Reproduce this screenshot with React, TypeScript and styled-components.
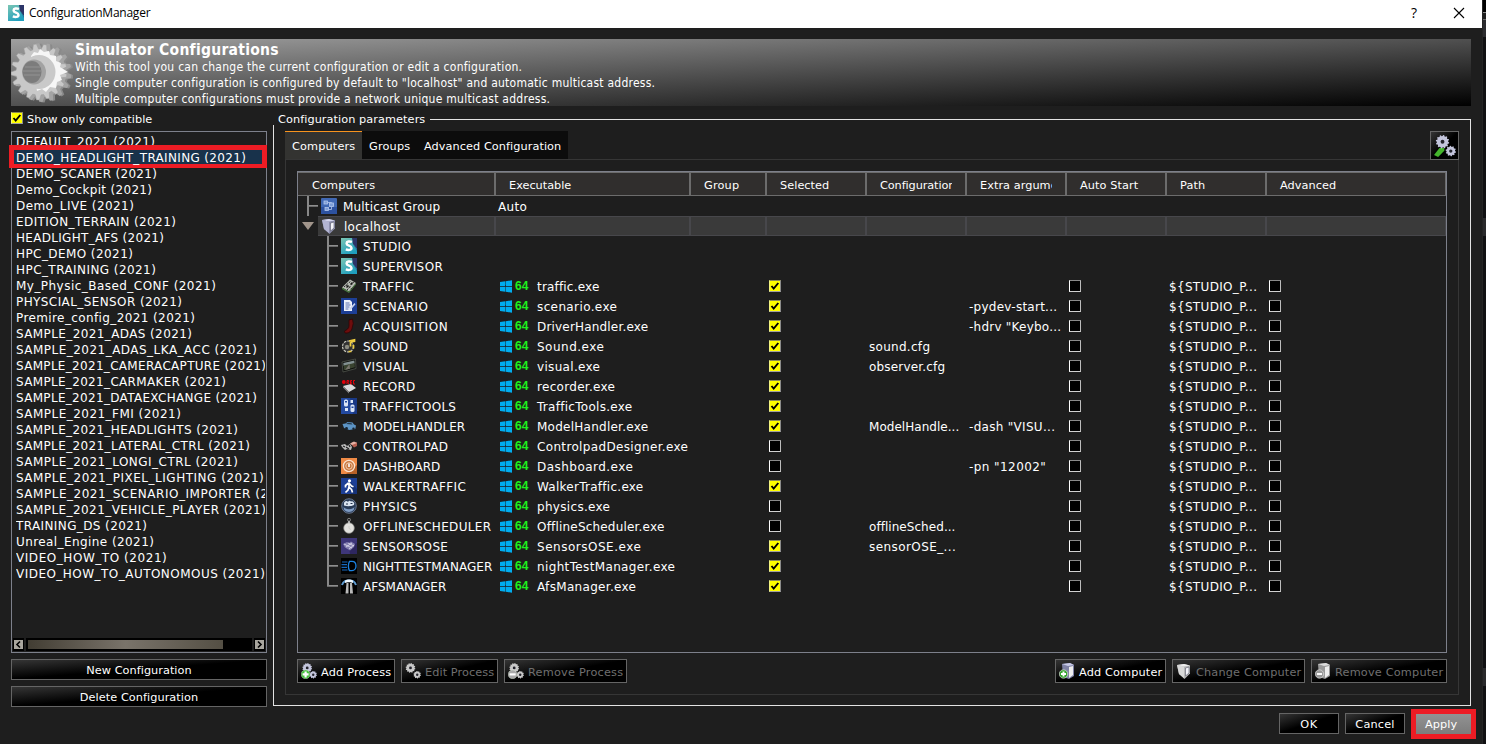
import React, { useLayoutEffect, useRef, useState } from 'react';
import styled, { createGlobalStyle, css } from 'styled-components';

const Global = createGlobalStyle`
  body { margin: 0; background: #1e1e1e; overflow: hidden; }
  * { box-sizing: border-box; }
  #root { font-family: Verdana, "DejaVu Sans", sans-serif; font-size: 12px; color: #fff; }
`;

/* ---------- text that is tracked to a given width ---------- */
const FitSpan = styled.span`
  display: inline-block;
  white-space: pre;
  flex: none;
`;
function Fit({ w, children }: { w: number; children: string }) {
  const ref = useRef<HTMLSpanElement>(null);
  const [spacing, setSpacing] = useState(0);
  useLayoutEffect(() => {
    if (ref.current) {
      const natural = ref.current.getBoundingClientRect().width;
      setSpacing((w + 0.3 - natural) / children.length);
    }
  }, []);
  return <FitSpan ref={ref} style={{ letterSpacing: `${spacing}px` }}>{children}</FitSpan>;
}

/* ---------- frame ---------- */
const Screen = styled.div`
  display: flex;
  width: 1486px;
  height: 744px;
  background: #1e1e1e;
`;
const Window = styled.div`
  display: flex;
  flex-direction: column;
  width: 1482px;
`;
const Behind = styled.div`
  width: 4px;
  background: #111113;
  border-left: 1px solid #242424;
  display: flex;
  flex-direction: column;
`;
const BehindPart = styled.div<{ $h: number; $c: string }>`
  height: ${p => p.$h}px;
  background: ${p => p.$c};
`;
const TitleBar = styled.div`
  display: flex;
  align-items: center;
  height: 28px;
  padding: 0 17px 3px 8px;
  background: #fff;
  color: #000;
  font-family: "Segoe UI", "Open Sans", sans-serif;
  font-size: 12px;
`;
const TitleText = styled.div`
  flex: 1;
  padding: 0 0 0 5px;
`;
const HelpMark = styled.div`
  width: 8px;
  margin-right: 34px;
  font-size: 14px;
`;
const Banner = styled.div`
  display: flex;
  width: 1460px;
  height: 67px;
  margin: 11px 0 0 11px;
  background: linear-gradient(to bottom right, #a0a0a0, #000);
`;
const BannerText = styled.div`
  padding: 2px 0 0 2px;
  font-family: Tahoma, "DejaVu Sans Condensed", "DejaVu Sans", sans-serif;
  font-stretch: condensed;
  line-height: 16px;
`;
const BannerTitle = styled.div`
  font-size: 15.5px;
  font-weight: bold;
  line-height: 18px;
`;
const Main = styled.div`
  display: flex;
  gap: 6px;
  height: 600px;
  padding-left: 11px;
`;

/* ---------- left column ---------- */
const Side = styled.div`
  display: flex;
  flex-direction: column;
  width: 256px;
`;
const CheckLine = styled.div`
  display: flex;
  flex: none;
  align-items: center;
  gap: 4px;
  height: 25px;
  padding-bottom: 1px;
  font-size: 11.3px;
  ${FitSpan} { padding-top: 2px; }
`;
const ListBox = styled.div`
  display: flex;
  flex: none;
  flex-direction: column;
  height: 522px;
  margin-bottom: 6px;
  padding: 1px;
  border: 1px solid #7d808b;
`;
const ListRows = styled.div`
  flex: 1;
`;
const ListRow = styled.div`
  height: 16px;
  padding-left: 3px;
  line-height: 19px;
  white-space: nowrap;
`;
const Clip = styled.div`
  height: 16px;
  overflow: hidden;
`;
const SelectedRow = styled(ListRow)`
  position: relative;
  z-index: 1;
  width: 258px;
  height: 23px;
  margin: -4px 0 -3px -4px;
  padding-left: 2px;
  border: 5px solid #ed1c24;
  border-bottom-width: 4px;
  background: #18324b;
  line-height: 17px;
`;
const ScrollBar = styled.div`
  display: flex;
  gap: 2px;
  height: 13px;
`;
const ScrollEnd = styled.div`
  display: flex;
  align-items: center;
  justify-content: center;
  width: 11px;
  background: #000;
`;
const ScrollTrack = styled.div`
  flex: 1;
  padding: 2px;
  background: #000;
`;
const ScrollThumb = styled.div`
  width: 195px;
  height: 9px;
  background: linear-gradient(to right, #423d33, #79736a 50%, #544f44);
`;
const boxed = css`
  display: flex;
  align-items: center;
  justify-content: center;
  border: 1px solid #656565;
  background: linear-gradient(to bottom right, #353535, #000 50%);
  color: #fff;
  font-family: inherit;
  font-size: 11.3px;
  ${FitSpan} { padding-top: 2px; }
`;
const WideButton = styled.div`
  ${boxed}
  flex: none;
  height: 21px;
  margin-bottom: 6px;
`;

/* ---------- group box ---------- */
const Group = styled.div`
  display: flex;
  flex-direction: column;
  width: 1198px;
`;
const GroupHead = styled.div`
  display: flex;
  height: 19px;
  padding-left: 5px;
  font-size: 11.3px;
  line-height: 27px;
`;
const GroupRule = styled.div`
  flex: 1;
  height: 6px;
  margin: 13px 0 0 5px;
  border: solid #e2e2e2;
  border-width: 1px 1px 0 0;
`;
const GroupBody = styled.div`
  flex: 1;
  display: flex;
  flex-direction: column;
  padding: 6px 11px 10px;
  border: solid #e2e2e2;
  border-width: 0 1px 1px 1px;
`;
const TabRow = styled.div`
  display: flex;
  height: 28px;
`;
const Tab = styled.div<{ $active?: boolean; $w: number }>`
  width: ${p => p.$w}px;
  padding-left: 7px;
  border-top: 1px solid ${p => (p.$active ? '#f7931e' : '#0c0c0c')};
  background: ${p => (p.$active ? '#333331' : '#0c0c0c')};
  font-size: 11.3px;
  line-height: 29px;
`;
const GearButton = styled.div`
  ${boxed}
  position: relative;
  width: 29px;
  height: 29px;
  margin-left: auto;
`;
const Pane = styled.div`
  flex: 1;
  padding: 11px;
  border: 1px solid #363636;
`;
const ButtonRow = styled.div`
  display: flex;
  gap: 6px;
  margin-top: 6px;
`;
const IconButton = styled.div<{ $w: number; $off?: boolean; $push?: boolean }>`
  ${boxed}
  justify-content: flex-start;
  gap: 4px;
  width: ${p => p.$w}px;
  height: 24px;
  padding-left: 3px;
  margin-left: ${p => (p.$push ? 'auto' : '0')};
  color: ${p => (p.$off ? '#6f6f6f' : '#fff')};
`;

/* ---------- table ---------- */
const Table = styled.div`
  height: 482px;
  border: 1px solid #7d808b;
`;
const columns = '198px 195px 76px 100px 100px 100px 100px 100px 179px';
const HeadRow = styled.div`
  display: grid;
  grid-template-columns: ${columns};
  height: 24px;
  border: solid #6c6c6c;
  border-width: 1px 0 1px 0;
`;
const HeadCell = styled.div`
  overflow: hidden;
  padding-left: 13px;
  border-right: 2px solid #6c6c6c;
  background: #302e2d;
  font-size: 11.3px;
  line-height: 25px;
  white-space: nowrap;
  &:first-child { padding-left: 14px; }
  &:last-child { border-right-width: 1px; }
`;
const HeadClip = styled.div`
  width: 72px;
  overflow: hidden;
`;
const Row = styled.div`
  display: grid;
  grid-template-columns: ${columns};
  height: 20px;
  ${FitSpan} { padding-top: 2px; }
`;
const Cell = styled.div<{ $lit?: boolean }>`
  display: flex;
  align-items: center;
  height: 20px;
  padding-left: 2px;
  white-space: nowrap;
  ${p => p.$lit && css`
    border: solid #47474b;
    border-width: 1px 2px 1px 0;
    background: #3a3a3a;
    &:last-child { border-right-width: 1px; }
  `}
`;
const NameCell = styled(Cell)`
  padding-left: 0;
`;
const HostLabel = styled.div`
  display: flex;
  align-items: center;
  gap: 7px;
  width: 178px;
  height: 20px;
  padding-left: 3px;
  border: solid #47474b;
  border-width: 1px 2px 1px 0;
  background: #3a3a3a;
`;
const Twisty = styled.div`
  width: 20px;
  padding-left: 4px;
  line-height: 0;
`;
const Branch = styled.div<{ $indent: number; $last?: boolean }>`
  width: 11px;
  height: 20px;
  margin-left: ${p => p.$indent}px;
  margin-right: 3px;
  background:
    linear-gradient(#888, #888) 0 0 / 2px ${p => (p.$last ? '10px' : '20px')} no-repeat,
    linear-gradient(#8e8e8e 50%, #6a6a6a 50%) 0 9px / 11px 2px no-repeat;
`;
const Name = styled.div`
  margin-left: 6px;
`;
const Bits = styled.span`
  width: 19px;
  padding-left: 3px;
  color: #1df01d;
  font: bold 12px "Liberation Sans", Arial, sans-serif;
`;
const Check = styled.div<{ $on?: boolean }>`
  display: flex;
  align-items: center;
  justify-content: center;
  flex: none;
  width: 12px;
  height: 12px;
  border: 1px solid;
  border-color: ${p => (p.$on ? '#8e8e50 #8a8a8a #a0a0a0 #f4f480' : '#8a8a8a #bdbdbd #d0d0d0 #fff')};
  background: ${p => (p.$on ? '#ff0' : '#000')};
`;

/* ---------- footer ---------- */
const Footer = styled.div`
  display: flex;
  justify-content: flex-end;
  align-items: flex-start;
  gap: 6px;
  padding: 3px 6px 0 0;
`;
const DialogButton = styled.div`
  ${boxed}
  width: 60px;
  height: 21px;
  margin-top: 4px;
`;
const Highlighted = styled.div`
  display: flex;
  width: 65px;
  height: 30px;
  padding-left: 9px;
  border: 5px solid #ed1c24;
  background: linear-gradient(#929292, #7c7c7c);
  font-size: 11.3px;
  line-height: 22px;
`;

/* ---------- icons ---------- */
const Svg = ({ s = 16, children }: { s?: number; children: React.ReactNode }) => (
  <svg width={s} height={s} viewBox="0 0 16 16" style={{ flex: 'none', display: 'block' }}>{children}</svg>
);
const gearPath = (cx: number, cy: number, r: number, n: number, root = 0.78) => {
  let d = '';
  for (let i = 0; i < n; i++) {
    const a = (i / n) * Math.PI * 2;
    const step = (Math.PI * 2) / n;
    [[0, root], [0.2, 1], [0.5, 1], [0.7, root]].forEach(([o, k], j) => {
      d += `${i + j ? 'L' : 'M'}${(cx + Math.cos(a + o * step) * r * k).toFixed(2)} ${(cy + Math.sin(a + o * step) * r * k).toFixed(2)}`;
    });
  }
  return d + 'Z';
};
const BrandIcon = () => (
  <Svg>
    <defs><linearGradient id="brand" x2="0.6" y2="1"><stop stopColor="#7cc6b4" /><stop offset="1" stopColor="#1f9fbe" /></linearGradient></defs>
    <rect width="16" height="16" fill="url(#brand)" />
    <path d="M11 0h5v11L12 6z" fill="#2c3568" />
    <path d="M12 6l4 5v2z" fill="#226f96" />
    <path d="M11 3.9C8.500 3 5.600 3.400 5.600 5.500c0 2.500 4.900 1.900 4.900 4.500 0 2.200-3.300 2.300-5.700 1.400" fill="none" stroke="#fff" strokeWidth="2.500" />
  </Svg>
);
const NetworkIcon = () => (
  <Svg>
    <rect width="16" height="16" rx="1" fill="#4068b4" />
    <path d="M0 9h16v7H0z" fill="#2d52a0" />
    <g fill="#7f9fd8" stroke="#b4c8ee" strokeWidth=".8"><rect x="3" y="3" width="3.500" height="3" /><rect x="8.500" y="5" width="4" height="3.500" /><rect x="4" y="9.500" width="3.500" height="3" /><path d="M6.500 4.500h4V5M10.500 9v2.500h-3" fill="none" /></g>
  </Svg>
);
const ServerIcon = ({ gray, mark }: { gray?: boolean; mark?: 'plus' | 'minus' }) => (
  <Svg s={16}>
    {mark ? (
      <>
        <path d="M3 1l8-1 4 2v11l-5 3-6-2z" fill={gray ? '#999' : '#7f82a5'} />
        <path d="M3 1l8-1 4 2-6 1z" fill={gray ? '#ddd' : '#c8cae8'} />
        <path d="M10 4l4-1v9l-4 3z" fill="#eee" />
        <circle cx="4.500" cy="11" r="4.200" fill={gray ? '#999' : '#35a52d'} stroke="#ddd" strokeWidth=".7" />
        <path d={mark === 'plus' ? 'M2 11h5M4.500 8.500v5' : 'M2 11h5'} stroke="#fff" strokeWidth="1.900" />
      </>
    ) : (
      <>
        <path d="M1 2l7-1 6 1.500v8L8.500 16 3 11z" fill={gray ? '#b7b7b7' : '#8d8fae'} />
        <path d="M1 2l7-1 6 1.500-6 1z" fill={gray ? '#eee' : '#d5d6ee'} />
        <path d="M1 2l7 1.500V15l-5-4z" fill={gray ? '#d8d8d8' : '#b2b4d2'} />
        <path d="M9.500 5l3.500-1v6l-3.500 3z" fill="#f4f4fa" stroke="#555768" strokeWidth=".6" />
      </>
    )}
  </Svg>
);
const GearsIcon = ({ gray, mark, s = 16 }: { gray?: boolean; mark?: 'plus' | 'minus' | 'arrow'; s?: number }) => (
  <Svg s={s}>
    {mark === 'arrow' && <path d="M0 14.500L4 9.500h3.500v2L3 16z" fill="#44b52c" />}
    <g fill={gray ? '#c9c9c9' : '#c3c5dc'}>
      <path d={gearPath(mark ? 6.200 : 5.500, 4.900, 4.900, 12, 0.84)} />
      <path d={gearPath(12.200, 11.700, 3.800, 10, 0.82)} />
    </g>
    <circle cx={mark ? 6.200 : 5.500} cy="4.900" r="1.400" fill="#22222b" />
    <circle cx="12.200" cy="11.700" r="1.200" fill="#22222b" />
    {(mark === 'plus' || mark === 'minus') && (
      <>
        <circle cx="4.600" cy="11.400" r="4.400" fill={gray ? '#a9a9a9' : '#45c23c'} stroke="#e2f3df" strokeWidth=".4" />
        <path d={mark === 'plus' ? 'M1.600 11.400h6M4.600 8.400v6' : 'M1.500 11.400h6.200'} stroke="#fff" strokeWidth="2.200" />
      </>
    )}
  </Svg>
);
const BigGear = () => (
  <svg width="62" height="67" viewBox="0 0 62 67" style={{ flex: 'none' }}>
    <path d={gearPath(33, 34, 29.500, 17, 0.83)} fill="#8a8a8a" />
    <path d={gearPath(31, 33.500, 29.500, 17, 0.83)} fill="#a4a4a4" />
    <path d={gearPath(28, 33, 28, 17, 0.82)} fill="#c8c8c8" stroke="#9a9a9a" strokeWidth=".5" />
    <path d="M20 17l3-4 4 1 2-4 4 3 5-1 1 4 6 1 0 5 5 2-1 4 8 5-8 3 2 5-5 2-1 6-6-1-4 5-4-3-5 2z" fill="#f6f6f6" />
    <ellipse cx="28" cy="33" rx="16.500" ry="17" fill="#c9c9c9" />
    <ellipse cx="23" cy="33" rx="12" ry="12.500" fill="#a2a2a2" />
    <ellipse cx="21" cy="33" rx="9.500" ry="11" fill="#7c7c7c" />
    <path d="M14 28h15M12 32h19M13 36h16" stroke="#929292" />
  </svg>
);
const WindowsIcon = () => (
  <svg width="12" height="13" viewBox="0 0 12 13" style={{ flex: 'none', marginLeft: 2 }}>
    <g fill="#00adef"><path d="M0 2l5.300-.7V6H0zM5.800 1.200L12 .3V6H5.800zM0 6.800h5.300v4.900L0 11zM5.800 6.800H12v5.900l-6.200-.9z" /></g>
  </svg>
);
const Tick = () => (
  <svg width="10" height="10" viewBox="0 0 10 10"><path d="M1.500 5l2.200 2.600L8.300 2" fill="none" stroke="#000" strokeWidth="1.900" /></svg>
);
const ScrollArrow = ({ d }: { d: string }) => (
  <svg width="9" height="9" viewBox="0 0 9 9"><rect width="9" height="9" fill="#aaa79f" /><path d={d} fill="none" stroke="#000" strokeWidth="1.600" /></svg>
);

const processIcons: Record<string, React.ReactNode> = {
  traffic: (
    <><path d="M1 9.500L9 1.500l6 3.500-7 8.500z" fill="#b9bdb5" /><path d="M1 9.500l7 4 7-8.500v1.500L8 15 1 11z" fill="#4a7a42" /><path d="M3 9l7-6M6 12l7-8M5 7l6 4" stroke="#2b2b2b" strokeWidth="1" strokeDasharray="2 1.200" /><path d="M5 9l2-2 1 1-2 2zM9 6l2-2 1 1-2 2z" fill="#151515" /></>
  ),
  scenario: (
    <><rect width="16" height="16" fill="#1d3f96" /><path d="M3 2h6l2 2v9H3z" fill="#eef2fb" /><path d="M4.500 5h4M4.500 7h5M4.500 9h4M4.500 11h3" stroke="#5a70b0" /><path d="M8 11l5.500-6 1 1.200L9.500 12z" fill="#c9d4ee" /></>
  ),
  acquisition: (
    <path d="M8 2l3.500-1 .7 4.500-1.200 5c-1 3.500-4 5-7 4.500L3.500 13c2-1 4.500-2.500 4.500-5z" fill="#6d0d0d" stroke="#300505" strokeWidth=".8" />
  ),
  sound: (
    <><circle cx="7" cy="8.500" r="5.500" fill="#333" stroke="#c9c9bd" strokeWidth="1.200" strokeDasharray="2.500 1" /><circle cx="6" cy="9" r="2.200" fill="#8b8b80" /><path d="M8 3l5.500-1.300v1.600L9.500 4M9.500 4v4.500M12.500 7v3.500M7.500 13.500h3" fill="none" stroke="#f0cd3e" strokeWidth="1.700" /></>
  ),
  visual: (
    <><path d="M1 4l13.500-3 .5 9.500L2 14z" fill="#0d0f0d" stroke="#50554d" strokeWidth=".8" /><path d="M2.300 5l11-2.500.3 3-11 2.500z" fill="#829091" /><path d="M2.600 7.500l11-2.500.3 4.300-11 3z" fill="#39432f" /><path d="M8.500 6L4 12l5-1.300z" fill="#77756c" /></>
  ),
  record: (
    <><path d="M2 8l8-2 5 4-7 4z" fill="#dadada" /><path d="M2 8l6 6v1.500L2 9.500z" fill="#888" /><circle cx="2.800" cy="4" r="1.900" fill="#e3000b" /><path d="M6 6V2.500h1.700V4L6 4.300M7 4.500L8 6M11 2.500H9.500V6H11M9.500 4.200H11M14 2.500h-1.500V6H14" fill="none" stroke="#e3000b" strokeWidth="1" /></>
  ),
  traffictools: (
    <><rect width="16" height="16" fill="#23499f" /><path d="M9 0h7v16H12z" fill="#1a3985" /><g fill="#dbe5f7"><rect x="3" y="1.500" width="4" height="7" rx="1.500" /><rect x="9.500" y="6.500" width="4" height="7.500" rx="1.500" /><path d="M4 10h3v3H4zM9.500 2H12v3H9.500z" /></g><path d="M4 3h2v1.500H4zM10.500 8.500h2V10h-2z" fill="#23499f" /></>
  ),
  modelhandler: (
    <><path d="M1.500 6l3-.5L6.500 4l5 .5 1.500 2 2 1-.7 3.500-6 1L3 10z" fill="#5c94c5" /><path d="M5 6l2-1.200 3.500.4 1 1.300z" fill="#23384c" /><circle cx="5.500" cy="10.500" r="1.400" fill="#172431" /><circle cx="12.500" cy="10.800" r="1.200" fill="#172431" /></>
  ),
  controlpad: (
    <><path d="M0 7l4-1 2 2 3-2 2 3-1 3-4-1-2 1-3-3z" fill="#bcbcbc" /><path d="M2 8l2 1M5 9l3 2M8 7l1 2" stroke="#222" strokeWidth="1.300" /><path d="M10 6l2-2 4 .5V8l-3 1.500z" fill="#b95f50" /><path d="M9 5.500l4-2 3 1.500-5 2z" fill="#e4b1a4" /></>
  ),
  dashboard: (
    <><rect width="16" height="16" fill="#ef8a45" /><path d="M5 16L16 7v9z" fill="#b86127" /><circle cx="8" cy="8" r="5.600" fill="#c77842" stroke="#fbe3d0" strokeWidth="1.300" /><circle cx="8" cy="8" r="3.200" fill="none" stroke="#f4cba9" /><path d="M8 5.500V9" stroke="#fff" strokeWidth="1.600" /></>
  ),
  walker: (
    <><rect width="16" height="16" fill="#1d3f96" /><path d="M9 3l7 8v5h-6z" fill="#163278" /><circle cx="8.500" cy="2.800" r="1.600" fill="#fff" /><path d="M8 4.500v5M7.500 5L4.500 7.500v2M8.500 5.500l2 2.500 2 .8M8 9l-1 3-2.500 2.500M8 9l2.500 2.500 1 3" fill="none" stroke="#fff" strokeWidth="1.700" /></>
  ),
  physics: (
    <><circle cx="8" cy="8" r="7.300" fill="#2a3c58" stroke="#7888a2" strokeWidth=".8" /><path d="M2.500 9c3 3 8 3 11 0l-.8 3c-2.500 2.500-7 2.500-9.500 0z" fill="#7f9cc4" /><path d="M3 5.500a2.200 2.200 0 014-1.500 2 2 0 013-.5 2.500 2.500 0 013 3.500c-3 1.500-7 1.500-10 .5z" fill="#dbe5f1" /><path d="M5 6h2M9.500 5.500h2" stroke="#233049" /></>
  ),
  scheduler: (
    <><circle cx="8" cy="10" r="5.300" fill="#e2e1dd" stroke="#8d8c88" strokeWidth=".7" /><path d="M7 3h2v2H7z" fill="#bbb" /><circle cx="8" cy="1.800" r="1.500" fill="none" stroke="#999" strokeWidth=".8" /><path d="M8 8v2.500l2 1" fill="none" stroke="#c9c8c4" strokeWidth=".8" /></>
  ),
  sensors: (
    <><rect width="16" height="16" fill="#3e3679" /><path d="M8 9l8-4v11H9z" fill="#2e2760" /><path d="M2 6l4-2 2 1 2-1.500L14 6l-1 3-4 3.500-5-3z" fill="#837eb0" /><path d="M3 6l8 4M7 5l6 3M5 9l6-4M8 11l5-4" stroke="#e2e0f0" strokeWidth=".8" /></>
  ),
  night: (
    <><rect width="16" height="16" fill="#000" /><path d="M1 4h5.500M.5 6.600H6M.5 9.300H6M1 12h5.500" stroke="#1767bd" strokeWidth="1.200" /><path d="M8.500 3.300h2.500c5.300 0 5.300 9.400 0 9.400H8.500c-1.500-2.500-1.500-6.900 0-9.400z" fill="none" stroke="#1d82e0" strokeWidth="1.300" /></>
  ),
  afs: (
    <><rect width="16" height="16" fill="#000" /><path d="M5.500 5h2v10.500H4.500zM9 5h2l1 10.500H9z" fill="#b9b9b9" /><path d="M1 7C2.500 2.500 5 2.500 8 2.500s5.500 0 7 4.500" fill="none" stroke="#5e9bd0" strokeWidth="2" /><path d="M4 2.500c2-1.500 6-1.500 8 0v2.500c-2-1-6-1-8 0z" fill="#eef6fc" /></>
  ),
};

/* ---------- data ---------- */
type Label = [string, number];
const configurations: Label[] = [
  ['DEFAULT_2021 (2021)', 139], ['DEMO_HEADLIGHT_TRAINING (2021)', 230], ['DEMO_SCANER (2021)', 141],
  ['Demo_Cockpit (2021)', 136], ['Demo_LIVE (2021)', 118], ['EDITION_TERRAIN (2021)', 160],
  ['HEADLIGHT_AFS (2021)', 148], ['HPC_DEMO (2021)', 117], ['HPC_TRAINING (2021)', 140],
  ['My_Physic_Based_CONF (2021)', 200], ['PHYSCIAL_SENSOR (2021)', 166], ['Premire_config_2021 (2021)', 179],
  ['SAMPLE_2021_ADAS (2021)', 176], ['SAMPLE_2021_ADAS_LKA_ACC (2021)', 241],
  ['SAMPLE_2021_CAMERACAPTURE (2021)', 250], ['SAMPLE_2021_CARMAKER (2021)', 210],
  ['SAMPLE_2021_DATAEXCHANGE (2021)', 241], ['SAMPLE_2021_FMI (2021)', 165],
  ['SAMPLE_2021_HEADLIGHTS (2021)', 222], ['SAMPLE_2021_LATERAL_CTRL (2021)', 234],
  ['SAMPLE_2021_LONGI_CTRL (2021)', 222], ['SAMPLE_2021_PIXEL_LIGHTING (2021)', 248],
  ['SAMPLE_2021_SCENARIO_IMPORTER (2021)', 282], ['SAMPLE_2021_VEHICLE_PLAYER (2021)', 250],
  ['TRAINING_DS (2021)', 131], ['Unreal_Engine (2021)', 138], ['VIDEO_HOW_TO (2021)', 151],
  ['VIDEO_HOW_TO_AUTONOMOUS (2021)', 249],
];
const selectedIndex = 1;
type Process = { icon: string; name: Label; exe: Label; on: boolean; cfg?: Label; extra?: Label };
const processes: Process[] = [
  { icon: 'traffic', name: ['TRAFFIC', 51], exe: ['traffic.exe', 62], on: true },
  { icon: 'scenario', name: ['SCENARIO', 65], exe: ['scenario.exe', 80], on: true, extra: ['-pydev-start...', 88] },
  { icon: 'acquisition', name: ['ACQUISITION', 85], exe: ['DriverHandler.exe', 111], on: true, extra: ['-hdrv "Keybo...', 92] },
  { icon: 'sound', name: ['SOUND', 45], exe: ['Sound.exe', 67], on: true, cfg: ['sound.cfg', 61] },
  { icon: 'visual', name: ['VISUAL', 45], exe: ['visual.exe', 63], on: true, cfg: ['observer.cfg', 76] },
  { icon: 'record', name: ['RECORD', 52], exe: ['recorder.exe', 78], on: true },
  { icon: 'traffictools', name: ['TRAFFICTOOLS', 93], exe: ['TrafficTools.exe', 95], on: true },
  { icon: 'modelhandler', name: ['MODELHANDLER', 102], exe: ['ModelHandler.exe', 111], on: true, cfg: ['ModelHandle...', 90], extra: ['-dash "VISU...', 86] },
  { icon: 'controlpad', name: ['CONTROLPAD', 85], exe: ['ControlpadDesigner.exe', 151], on: false },
  { icon: 'dashboard', name: ['DASHBOARD', 77], exe: ['Dashboard.exe', 96], on: false, extra: ['-pn "12002"', 77] },
  { icon: 'walker', name: ['WALKERTRAFFIC', 103], exe: ['WalkerTraffic.exe', 106], on: true },
  { icon: 'physics', name: ['PHYSICS', 54], exe: ['physics.exe', 73], on: false },
  { icon: 'scheduler', name: ['OFFLINESCHEDULER', 128], exe: ['OfflineScheduler.exe', 127], on: false, cfg: ['offlineSched...', 86] },
  { icon: 'sensors', name: ['SENSORSOSE', 85], exe: ['SensorsOSE.exe', 104], on: true, cfg: ['sensorOSE_...', 87] },
  { icon: 'night', name: ['NIGHTTESTMANAGER', 129], exe: ['nightTestManager.exe', 138], on: true },
  { icon: 'afs', name: ['AFSMANAGER', 83], exe: ['AfsManager.exe', 99], on: true },
];
const headings: [string, number, boolean?][] = [
  ['Computers', 63], ['Executable', 62], ['Group', 35], ['Selected', 49], ['Configuration', 75, true],
  ['Extra arguments', 95, true], ['Auto Start', 58], ['Path', 25], ['Advanced', 56],
];

const T = ({ t }: { t?: Label }) => (t ? <Fit w={t[1]}>{t[0]}</Fit> : null);

function ConfigurationList() {
  return (
    <ListRows>
      {configurations.map((t, i) =>
        i === selectedIndex
          ? <SelectedRow key={t[0]}><T t={t} /></SelectedRow>
          : <ListRow key={t[0]}><Clip><T t={t} /></Clip></ListRow>
      )}
    </ListRows>
  );
}

function ProcessRow({ p, last }: { p: Process; last: boolean }) {
  return (
    <Row>
      <NameCell><Branch $indent={29} $last={last} /><Svg>{processIcons[p.icon]}</Svg><Name><T t={p.name} /></Name></NameCell>
      <Cell><WindowsIcon /><Bits>64</Bits><Name><T t={p.exe} /></Name></Cell>
      <Cell />
      <Cell><Check $on={p.on}>{p.on && <Tick />}</Check></Cell>
      <Cell><T t={p.cfg} /></Cell>
      <Cell><T t={p.extra} /></Cell>
      <Cell><Check /></Cell>
      <Cell><Fit w={88}>{'${STUDIO_P...'}</Fit></Cell>
      <Cell><Check /></Cell>
    </Row>
  );
}

export default function App() {
  return (
    <Screen>
      <Global />
      <Window>
        <TitleBar>
          <BrandIcon />
          <TitleText><Fit w={121}>ConfigurationManager</Fit></TitleText>
          <HelpMark>?</HelpMark>
          <svg width="12" height="12" viewBox="0 0 12 12"><path d="M1 1l10 10M11 1L1 11" stroke="#000" strokeWidth="1.100" /></svg>
        </TitleBar>
        <Banner>
          <BigGear />
          <BannerText>
            <BannerTitle><Fit w={203}>Simulator Configurations</Fit></BannerTitle>
            <div><Fit w={447}>With this tool you can change the current configuration or edit a configuration.</Fit></div>
            <div><Fit w={580}>Single computer configuration is configured by default to "localhost" and automatic multicast address.</Fit></div>
            <div><Fit w={475}>Multiple computer configurations must provide a network unique multicast address.</Fit></div>
          </BannerText>
        </Banner>
        <Main>
          <Side>
            <CheckLine><Check $on><Tick /></Check><Fit w={125}>Show only compatible</Fit></CheckLine>
            <ListBox>
              <ConfigurationList />
              <ScrollBar>
                <ScrollEnd><ScrollArrow d="M6 1.500L3 4.500l3 3" /></ScrollEnd>
                <ScrollTrack><ScrollThumb /></ScrollTrack>
                <ScrollEnd><ScrollArrow d="M3 1.500l3 3-3 3" /></ScrollEnd>
              </ScrollBar>
            </ListBox>
            <WideButton><Fit w={105}>New Configuration</Fit></WideButton>
            <WideButton><Fit w={118}>Delete Configuration</Fit></WideButton>
          </Side>
          <Group>
            <GroupHead><Fit w={147}>Configuration parameters</Fit><GroupRule /></GroupHead>
            <GroupBody>
              <TabRow>
                <Tab $active $w={77}><Fit w={63}>Computers</Fit></Tab>
                <Tab $w={55}><Fit w={41}>Groups</Fit></Tab>
                <Tab $w={151}><Fit w={137}>Advanced Configuration</Fit></Tab>
                <GearButton><GearsIcon mark="arrow" s={22} /></GearButton>
              </TabRow>
              <Pane>
                <Table>
                  <HeadRow>
                    {headings.map(([label, w, clip]) => (
                      <HeadCell key={label}>{clip ? <HeadClip><Fit w={w}>{label}</Fit></HeadClip> : <Fit w={w}>{label}</Fit>}</HeadCell>
                    ))}
                  </HeadRow>
                  <Row>
                    <NameCell><Branch $indent={9} /><NetworkIcon /><Name><Fit w={97}>Multicast Group</Fit></Name></NameCell>
                    <Cell><Fit w={29}>Auto</Fit></Cell>
                  </Row>
                  <Row>
                    <NameCell>
                      <Twisty><svg width="12" height="9" viewBox="0 0 12 9"><path d="M0 0h12L6 8z" fill="#a1958b" /></svg></Twisty>
                      <HostLabel><ServerIcon /><Fit w={56}>localhost</Fit></HostLabel>
                    </NameCell>
                    {Array.from({ length: 8 }, (_, i) => <Cell key={i} $lit />)}
                  </Row>
                  {([['STUDIO', 48], ['SUPERVISOR', 80]] as Label[]).map(t => (
                    <Row key={t[0]}><NameCell><Branch $indent={29} /><BrandIcon /><Name><T t={t} /></Name></NameCell></Row>
                  ))}
                  {processes.map((p, i) => <ProcessRow key={p.icon} p={p} last={i === processes.length - 1} />)}
                </Table>
                <ButtonRow>
                  <IconButton $w={98}><GearsIcon mark="plus" /><Fit w={70}>Add Process</Fit></IconButton>
                  <IconButton $w={97} $off><GearsIcon gray /><Fit w={69}>Edit Process</Fit></IconButton>
                  <IconButton $w={123} $off><GearsIcon gray mark="minus" /><Fit w={95}>Remove Process</Fit></IconButton>
                  <IconButton $w={111} $push><ServerIcon mark="plus" /><Fit w={83}>Add Computer</Fit></IconButton>
                  <IconButton $w={133} $off><ServerIcon gray /><Fit w={105}>Change Computer</Fit></IconButton>
                  <IconButton $w={136} $off><ServerIcon gray mark="minus" /><Fit w={108}>Remove Computer</Fit></IconButton>
                </ButtonRow>
              </Pane>
            </GroupBody>
          </Group>
        </Main>
        <Footer>
          <DialogButton><Fit w={17}>OK</Fit></DialogButton>
          <DialogButton><Fit w={39}>Cancel</Fit></DialogButton>
          <Highlighted><Fit w={32}>Apply</Fit></Highlighted>
        </Footer>
      </Window>
      <Behind>
        <BehindPart $h={12} $c="#000" />
        <BehindPart $h={1} $c="#8a8a8a" />
        <BehindPart $h={6} $c="#1e1e1e" />
        <BehindPart $h={1} $c="#6a6a6a" />
        <BehindPart $h={17} $c="#2c2c2f" />
        <BehindPart $h={181} $c="#111113" />
        <BehindPart $h={18} $c="#2a2a2c" />
        <BehindPart $h={432} $c="#111113" />
        <BehindPart $h={18} $c="#2a2a2c" />
      </Behind>
    </Screen>
  );
}
